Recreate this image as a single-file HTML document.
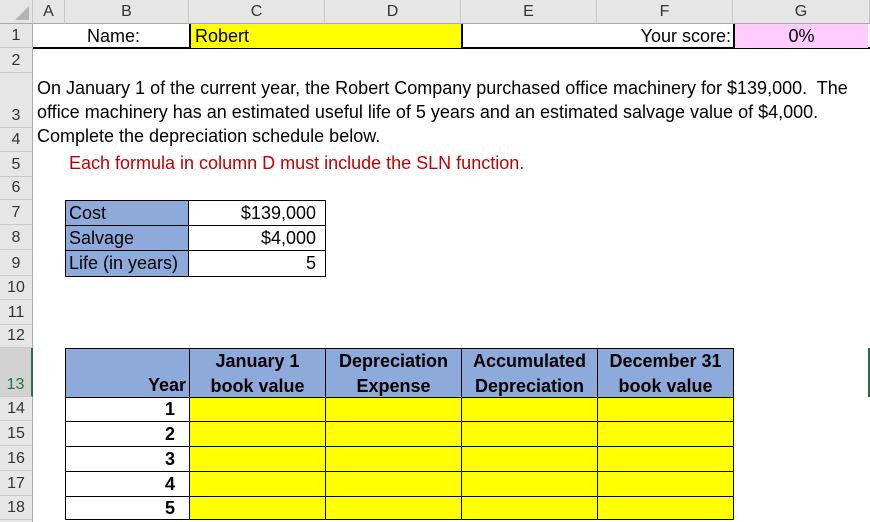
<!DOCTYPE html>
<html><head><meta charset="utf-8">
<style>
*{margin:0;padding:0}
body{width:870px;height:522px;position:relative;overflow:hidden;background:#fff;font-family:"Liberation Sans",Arial,sans-serif;color:#000}
.a{position:absolute;box-sizing:border-box;white-space:nowrap}
.ch{top:0;height:24px;background:#e6e6e6;border-right:1px solid #c8c8c8;border-bottom:1px solid #aaa;text-align:center;font-size:16px;line-height:24px;color:#333}
.rh{left:0;width:33px;background:#e6e6e6;border-bottom:1px solid #c8c8c8;border-right:1px solid #aaa;text-align:center;font-size:16px;color:#333;display:flex;align-items:flex-end;justify-content:center;padding-bottom:2px}
.t{font-size:18px}
.b{border:1px solid #000}
.hd{background:#8eaadb;font-weight:bold;font-size:18px;text-align:center;line-height:25px}
.y{background:#ffff00}
</style></head><body>
<div class="a ch" style="left:0;width:33px"><svg width="33" height="24" style="position:absolute;left:0;top:0"><polygon points="29,6 29,20 15,20" fill="#b4b4b4"/></svg></div>
<div class="a ch" style="left:33px;width:32px">A</div>
<div class="a ch" style="left:65px;width:124px">B</div>
<div class="a ch" style="left:189px;width:136px">C</div>
<div class="a ch" style="left:325px;width:136px">D</div>
<div class="a ch" style="left:461px;width:136px">E</div>
<div class="a ch" style="left:597px;width:136px">F</div>
<div class="a ch" style="left:733px;width:137px">G</div>
<div class="a rh" style="top:24px;height:24px">1</div>
<div class="a rh" style="top:48px;height:25px">2</div>
<div class="a rh" style="top:73px;height:55px">3</div>
<div class="a rh" style="top:128px;height:24px">4</div>
<div class="a rh" style="top:152px;height:25px">5</div>
<div class="a rh" style="top:177px;height:23px">6</div>
<div class="a rh" style="top:200px;height:25px">7</div>
<div class="a rh" style="top:225px;height:25px">8</div>
<div class="a rh" style="top:250px;height:26px">9</div>
<div class="a rh" style="top:276px;height:24px">10</div>
<div class="a rh" style="top:300px;height:25px">11</div>
<div class="a rh" style="top:325px;height:23px">12</div>
<div class="a rh" style="top:348px;height:49px;background:#d2d2d2;border-right:2px solid #217346;color:#217346">13</div>
<div class="a rh" style="top:397px;height:24px">14</div>
<div class="a rh" style="top:421px;height:25px">15</div>
<div class="a rh" style="top:446px;height:25px">16</div>
<div class="a rh" style="top:471px;height:25px">17</div>
<div class="a rh" style="top:496px;height:24px">18</div>
<div class="a" style="left:0;top:520px;width:33px;height:2px;background:#e6e6e6;border-right:1px solid #aaa"></div>

<div class="a" style="left:33px;top:47px;width:837px;height:2px;background:#000"></div>
<div class="a t" style="left:65px;top:24px;width:124px;height:24px;line-height:24px;text-align:right;padding-right:49px">Name:</div>
<div class="a t y" style="left:189px;top:24px;width:272px;height:24px;line-height:24px;padding-left:4px;border-left:2px solid #000">Robert</div>
<div class="a t" style="left:461px;top:24px;width:272px;height:24px;line-height:24px;text-align:right;padding-right:2px;border-left:2px solid #000">Your score:</div>
<div class="a t" style="left:733px;top:24px;width:135px;height:24px;line-height:24px;text-align:center;background:#ffccff;border-left:2px solid #000">0%</div>

<div class="a t" style="left:37px;top:76px;line-height:24px">On January 1 of the current year, the Robert Company purchased office machinery for $139,000.&nbsp; The<br>office machinery has an estimated useful life of 5 years and an estimated salvage value of $4,000.<br>Complete the depreciation schedule below.</div>
<div class="a t" style="left:69px;top:151px;line-height:24px;color:#c00000">Each formula in column D must include the SLN function.</div>

<div class="a" style="left:65px;top:200px;width:261px;height:77px;border:1px solid #000"></div>
<div class="a t" style="left:66px;top:201px;width:123px;height:25px;background:#8eaadb;padding-left:3px;line-height:25px;border-bottom:1px solid #000;border-right:1px solid #000">Cost</div>
<div class="a t" style="left:66px;top:226px;width:123px;height:25px;background:#8eaadb;padding-left:3px;line-height:25px;border-bottom:1px solid #000;border-right:1px solid #000">Salvage</div>
<div class="a t" style="left:66px;top:251px;width:123px;height:25px;background:#8eaadb;padding-left:3px;line-height:25px;border-right:1px solid #000">Life (in years)</div>
<div class="a t" style="left:189px;top:201px;width:136px;height:25px;text-align:right;padding-right:9px;line-height:25px;border-bottom:1px solid #000">$139,000</div>
<div class="a t" style="left:189px;top:226px;width:136px;height:25px;text-align:right;padding-right:9px;line-height:25px;border-bottom:1px solid #000">$4,000</div>
<div class="a t" style="left:189px;top:251px;width:136px;height:25px;text-align:right;padding-right:9px;line-height:25px">5</div>

<div class="a hd" style="left:65px;top:348px;width:125px;height:50px;border:1px solid #000;text-align:right;padding-right:3px;padding-top:24px">Year</div>
<div class="a hd" style="left:189px;top:348px;width:137px;height:50px;border:1px solid #000">January 1<br>book value</div>
<div class="a hd" style="left:325px;top:348px;width:137px;height:50px;border:1px solid #000">Depreciation<br>Expense</div>
<div class="a hd" style="left:461px;top:348px;width:137px;height:50px;border:1px solid #000">Accumulated<br>Depreciation</div>
<div class="a hd" style="left:597px;top:348px;width:137px;height:50px;border:1px solid #000">December 31<br>book value</div>

<div class="a b" style="left:65px;top:397px;width:125px;height:25px;font-weight:bold;text-align:right;padding-right:14px;line-height:23px;font-size:18px">1</div>
<div class="a b" style="left:65px;top:421px;width:125px;height:26px;font-weight:bold;text-align:right;padding-right:14px;line-height:24px;font-size:18px">2</div>
<div class="a b" style="left:65px;top:446px;width:125px;height:26px;font-weight:bold;text-align:right;padding-right:14px;line-height:24px;font-size:18px">3</div>
<div class="a b" style="left:65px;top:471px;width:125px;height:26px;font-weight:bold;text-align:right;padding-right:14px;line-height:24px;font-size:18px">4</div>
<div class="a b" style="left:65px;top:496px;width:125px;height:24px;font-weight:bold;text-align:right;padding-right:14px;line-height:22px;font-size:18px">5</div>

<div class="a y b" style="left:189px;top:397px;width:545px;height:123px"></div>
<div class="a" style="left:325px;top:397px;width:1px;height:123px;background:#000"></div>
<div class="a" style="left:461px;top:397px;width:1px;height:123px;background:#000"></div>
<div class="a" style="left:597px;top:397px;width:1px;height:123px;background:#000"></div>
<div class="a" style="left:189px;top:421px;width:545px;height:1px;background:#000"></div>
<div class="a" style="left:189px;top:446px;width:545px;height:1px;background:#000"></div>
<div class="a" style="left:189px;top:471px;width:545px;height:1px;background:#000"></div>
<div class="a" style="left:189px;top:496px;width:545px;height:1px;background:#000"></div>

<div class="a" style="left:868px;top:348px;width:2px;height:49px;background:#217346"></div>
</body></html>
